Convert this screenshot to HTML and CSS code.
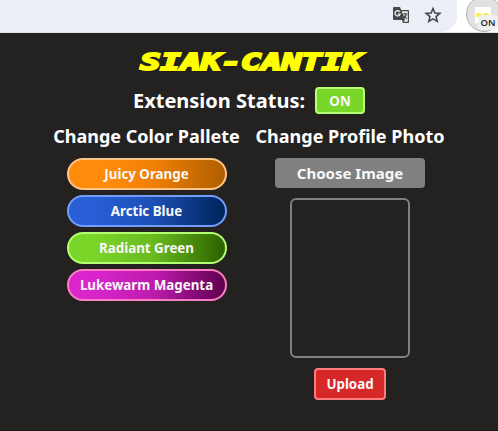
FILE: index.html
```html
<!DOCTYPE html>
<html lang="en">
<head>
<meta charset="utf-8">
<title>SIAK-CANTIK</title>
<link rel="stylesheet" href="styles.css">
</head>
<body>
<header class="toolbar">
  <div class="address">
    <svg class="translate" width="18" height="18" viewBox="0 0 18 18">
      <path d="M2 1h6l1.2 3H16a1 1 0 0 1 1 1v11a1 1 0 0 1-1 1h-5l-1-3H2a1 1 0 0 1-1-1V2a1 1 0 0 1 1-1z" fill="#474747"/>
      <path d="M9.7 5.2H15.8V15.8H11.5L13 14 9.7 5.2z" fill="#ebeef7"/>
      <path d="M7.8 6A2.6 2.6 0 1 0 8 8.2H5.8" fill="none" stroke="#ebeef7" stroke-width="1.3"/>
      <path d="M10.5 8h5M13 6.8V8M14.5 8c-.5 2-1.500 3-3 4M11.600 9.500l3.200 3.300" fill="none" stroke="#474747" stroke-width="1.1"/>
    </svg>
    <svg class="star" width="18" height="18" viewBox="0 0 18 18">
      <path d="M9 2.500l1.900 4.500 4.900.4-3.700 3.200 1.100 4.800L9 12.900l-4.200 2.500 1.100-4.800L2.200 7.400l4.900-.4z" fill="none" stroke="#474747" stroke-width="1.600"/>
    </svg>
  </div>
  <div class="extension">
    <div class="ext-icon"><i></i><i></i></div>
    <span class="badge">ON</span>
  </div>
</header>
<main class="popup">
  <h1><span>SIAK-CANTIK</span></h1>
  <div class="status"><h2>Extension Status:</h2><button class="toggle">ON</button></div>
  <div class="columns">
    <section class="palette">
      <h3>Change Color Pallete</h3>
      <button class="pill orange">Juicy Orange</button>
      <button class="pill blue">Arctic Blue</button>
      <button class="pill green">Radiant Green</button>
      <button class="pill magenta">Lukewarm Magenta</button>
    </section>
    <section class="photo">
      <h3>Change Profile Photo</h3>
      <button class="choose">Choose Image</button>
      <div class="preview"></div>
      <button class="upload">Upload</button>
    </section>
  </div>
</main>
</body>
</html>
```
FILE: styles.css
```css
* { box-sizing: border-box; margin: 0; }
body { width: 498px; height: 431px; overflow: hidden; background: #232221; color: #fff; font-family: "Noto Sans", sans-serif; }
button { font: 700 13.33px/18px "Noto Sans", sans-serif; color: #f8f8f8; padding: 0; white-space: nowrap; }
.toolbar { display: flex; height: 33px; background: #fff; border-bottom: 1px solid #dfe3e4; overflow: hidden; }
.address { width: 457px; height: 32px; flex: none; background: #ebeef7; border-radius: 0 0 16px 0; display: flex; justify-content: flex-end; gap: 14px; padding: 6px 15px 0 0; }
.extension { position: relative; flex: none; margin: -4px 0 0 9px; width: 36px; height: 36px; border-radius: 50%; background: #e1e1e1; border: 1px solid #b5b5b5; }
.ext-icon { display: flex; gap: 1px; width: 16px; height: 16px; margin: 10px 0 0 8px; padding: 6px 1px; background: #fff; }
.ext-icon i { width: 6px; height: 4px; background: #f8f04a; border-radius: 2px 2px 0 0; }
.badge { position: absolute; left: 11px; top: 18px; width: 20px; height: 15px; border-radius: 4px; background: #f0f0f0; color: #222; font: 600 9.5px/15px "Open Sans", sans-serif; text-align: center; }
.popup { height: 398px; display: flex; flex-direction: column; align-items: center; padding-top: 14px; border-bottom: 1px solid #1d1818; }
h1 { height: 30px; font: italic 700 23px/30px "DejaVu Sans Mono", monospace; color: #ff0; }
h1 span { display: block; transform: translateX(2px) scaleX(1.455); -webkit-text-stroke: 2.1px #ff0; text-shadow: 1px 1px 1px #000; }
.status { display: flex; align-items: center; gap: 10px; height: 27px; margin-top: 10px; }
h2 { font: 700 20px/27px "Noto Sans", sans-serif; white-space: nowrap; }
.toggle { width: 50px; height: 27px; background: #7bd62a; border: 2px solid #b7ff77; border-radius: 4px; }
.columns { display: flex; gap: 15px; margin-top: 10px; }
section { display: flex; flex-direction: column; align-items: center; }
.palette { width: 187px; }
.photo { width: 190px; }
h3 { font: 700 18px/25px "Noto Sans", sans-serif; white-space: nowrap; }
.pill { width: 160px; height: 32px; margin-bottom: 5px; border: 2px solid; border-radius: 16px; }
h3 + button { margin-top: 9px; }
.orange { background: linear-gradient(93deg, #ff8b0a 25%, #ef7f06 55%, #b25f00 98%); border-color: #ffc58a; }
.blue { background: linear-gradient(93deg, #285fd7 15%, #1c4fb5 55%, #00245c 98%); border-color: #739eff; }
.green { background: linear-gradient(93deg, #7bd62a 15%, #68b91f 55%, #2f6400 98%); border-color: #b4ff73; }
.magenta { background: linear-gradient(93deg, #d926cc 15%, #bc1bad 55%, #620050 98%); border-color: #ff7dc5; }
.choose { width: 150px; height: 30px; font-size: 15px; background: #808080; border: 0; border-radius: 4px; }
.preview { width: 120px; height: 160px; margin: 10px 0; border: 2px solid #808080; border-radius: 6px; }
.upload { width: 72px; height: 32px; background: #d62828; border: 2px solid #ff7b7b; border-radius: 4px; }
```
